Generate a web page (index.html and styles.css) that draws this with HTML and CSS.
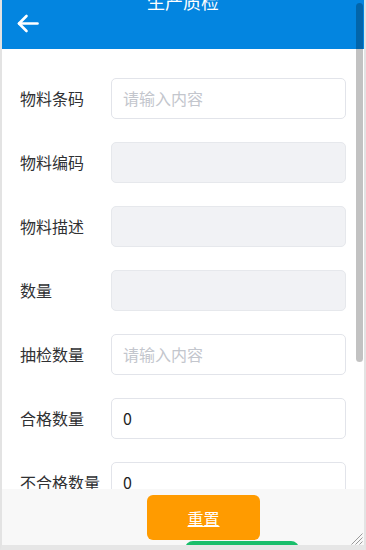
FILE: index.html
```html
<!DOCTYPE html>
<html lang="zh">
<head>
<meta charset="utf-8">
<title>生产质检</title>
<link rel="stylesheet" href="styles.css">
</head>
<body>
<div class="frame">
  <header class="header">
    <div class="title">生产质检</div>
    <div class="back">
      <svg width="22" height="19" viewBox="0 0 22 19" fill="none" stroke="#fff" stroke-width="2.6" stroke-linecap="round" stroke-linejoin="round">
        <path d="M20.5 9.5H2"/>
        <path d="M9.5 2L2 9.5l7.5 7.5"/>
      </svg>
    </div>
  </header>
  <main class="form">
    <div class="row"><label class="label">物料条码</label><div class="input placeholder">请输入内容</div></div>
    <div class="row"><label class="label">物料编码</label><div class="input disabled"></div></div>
    <div class="row"><label class="label">物料描述</label><div class="input disabled"></div></div>
    <div class="row"><label class="label">数量</label><div class="input disabled"></div></div>
    <div class="row"><label class="label">抽检数量</label><div class="input placeholder">请输入内容</div></div>
    <div class="row"><label class="label">合格数量</label><div class="input">0</div></div>
    <div class="row"><label class="label">不合格数量</label><div class="input">0</div></div>
  </main>
  <footer class="footer">
    <a class="btn btn-reset" href="#">重置</a>
    <a class="btn btn-submit" href="#">提交</a>
  </footer>
  <div class="thumb"></div>
  <svg class="grip" width="13" height="13" viewBox="0 0 13 13" stroke="#9a9a9a" stroke-width="1">
    <path d="M12.5 1.5L1.5 12.5M12.5 5.5L5.5 12.5M12.5 9.5L9.5 12.5"/>
  </svg>
</div>
</body>
</html>
```
FILE: styles.css
```css
* { box-sizing: border-box; }
html, body { margin: 0; padding: 0; }
body {
  font-family: "Noto Sans CJK SC", "Noto Sans", sans-serif;
  background: #fff;
}
.frame {
  position: relative;
  width: 366px;
  height: 550px;
  overflow: hidden;
  border-left: 2px solid #e3e3e3;
  border-right: 2px solid #e3e3e3;
  border-bottom: 5px solid #e6e6e6;
  background: #fff;
}
.header {
  height: 49px;
  background: #0385e0;
  color: #fff;
  overflow: hidden;
}
.title {
  margin-top: -8px;
  height: 18px;
  line-height: 18px;
  font-size: 18px;
  text-align: center;
}
.back {
  margin: 4px 0 0 15px;
  height: 19px;
  display: flex;
}
.form {
  padding: 29px 18px 0 18px;
}
.row {
  display: flex;
  align-items: center;
  height: 40px;
  margin-bottom: 24px;
}
.label {
  width: 91px;
  flex: none;
  font-size: 16px;
  color: #303133;
  white-space: nowrap;
}
.input {
  flex: 1;
  height: 41px;
  border: 1px solid #e2e4ea;
  border-radius: 5px;
  padding-left: 11px;
  font-size: 16px;
  line-height: 39px;
  color: #1f1f1f;
  background: #fff;
}
.input.placeholder { color: #c3c6cd; }
.input.disabled { background: #f1f2f5; border-color: #e6e8ec; }
.footer {
  position: absolute;
  left: 0;
  right: 0;
  bottom: 0;
  height: 56px;
  background: #f8f8f8;
  overflow: hidden;
}
.btn {
  display: flex;
  align-items: center;
  justify-content: center;
  width: 113px;
  height: 45px;
  border-radius: 6px;
  color: #fff;
  font-size: 16px;
  text-decoration: underline;
}
.btn-reset {
  margin: 6px 0 0 145px;
  background: #ff9b00;
}
.btn-submit {
  margin: 1px 0 0 183px;
  width: 114px;
  background: #19be6b;
  border-radius: 8px;
}
.thumb {
  position: absolute;
  top: 3px;
  left: 354px;
  width: 7px;
  height: 359px;
  border-radius: 4px;
  background: rgba(0, 0, 0, 0.24);
}
.grip {
  position: absolute;
  right: 1px;
  bottom: 0;
}
```
